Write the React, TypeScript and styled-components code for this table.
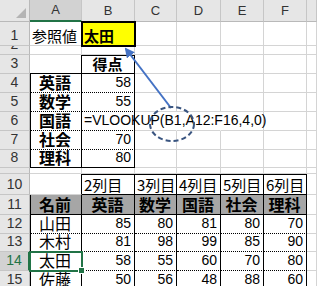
import styled, { createGlobalStyle, css } from 'styled-components'

type Line = 'grid' | 'solid' | 'dotted' | 'none'

type Spec = {
  text?: string
  r?: Line
  b?: Line
  l?: boolean
  t?: boolean
  align?: 'left' | 'center' | 'right'
  bold?: boolean
  bg?: string
  jp?: boolean
  size?: number
  mark?: 'ref' | 'sel'
  spill?: boolean
}

const GlobalStyle = createGlobalStyle`
  html, body {
    margin: 0;
    padding: 0;
    background: #fff;
    overflow: hidden;
  }
`

const COLS = ['A', 'B', 'C', 'D', 'E', 'F', '']
const ROW_HEIGHTS = [24, 9, 19, 19, 19, 19, 19, 18, 6, 21, 20, 19, 18, 19, 19]

// 表1: 得点
const subjects: [string, string][] = [
  ['英語', '58'],
  ['数学', '55'],
  ['国語', ''],
  ['社会', '70'],
  ['理科', '80'],
]

// 表2: 成績一覧
const people: [string, number[]][] = [
  ['山田', [85, 80, 81, 80, 70]],
  ['木村', [81, 98, 99, 85, 90]],
  ['太田', [58, 55, 60, 70, 80]],
  ['佐藤', [50, 56, 48, 88, 60]],
]

const empty = (n: number): Spec[] => Array.from({ length: n }, () => ({}))

function buildRows(): Spec[][] {
  const rows: Spec[][] = []
  rows.push([
    { text: '参照値', jp: true, align: 'left' },
    { text: '太田', jp: true, bold: true, bg: '#ffff00', mark: 'ref' },
    ...empty(5),
  ])
  rows.push(empty(7))
  rows.push([
    { r: 'solid', b: 'solid' },
    { text: '得点', jp: true, bold: true, align: 'center', t: true, r: 'solid', b: 'solid', size: 15 },
    ...empty(5),
  ])
  subjects.forEach(([name, score], i) => {
    const last = i === subjects.length - 1
    const b: Line = last ? 'solid' : 'dotted'
    const isFormula = name === '国語'
    rows.push([
      { text: name, jp: true, bold: true, align: 'center', l: true, r: 'solid', b, size: 16 },
      isFormula
        ? { text: '=VLOOKUP(B1,A12:F16,4,0)', align: 'left', r: 'solid', b, spill: true }
        : { text: score, align: 'right', r: 'solid', b },
      isFormula ? { r: 'none' } : {},
      isFormula ? { r: 'none' } : {},
      {},
      {},
      {},
    ])
  })
  rows.push(empty(7))
  rows.push([
    { r: 'solid' },
    ...['2列目', '3列目', '4列目', '5列目', '6列目'].map<Spec>((t) => ({
      text: t,
      jp: true,
      align: 'left',
      t: true,
      r: 'solid',
      b: 'solid',
    })),
    {},
  ])
  rows.push([
    ...['名前', '英語', '数学', '国語', '社会', '理科'].map<Spec>((t, i) => ({
      text: t,
      jp: true,
      bold: true,
      align: 'center',
      bg: '#a6a6a6',
      l: i === 0,
      r: 'solid',
      b: 'solid',
      size: 16,
    })),
    {},
  ])
  people.forEach(([name, scores]) => {
    rows.push([
      {
        text: name,
        jp: true,
        align: 'center',
        l: true,
        r: 'solid',
        b: 'dotted',
        size: 16,
        mark: name === '太田' ? 'sel' : undefined,
      },
      ...scores.map<Spec>((s) => ({ text: String(s), align: 'right', r: 'solid', b: 'dotted' })),
      {},
    ])
  })
  return rows
}

export default function App() {
  const rows = buildRows()
  return (
    <>
      <GlobalStyle />
      <Sheet>
        <Corner />
        {COLS.map((c) => (
          <ColHeader key={c || 'g'} $active={c === 'A'}>
            {c}
          </ColHeader>
        ))}
        {rows.map((row, ri) => [
          <RowHeader key={`h${ri}`} $active={ri + 1 === 14}>
            {ri + 1}
          </RowHeader>,
          ...row.map((s, ci) => (
            <Cell
              key={`${ri}-${ci}`}
              $r={s.r}
              $b={s.b}
              $l={s.l}
              $t={s.t}
              $align={s.align}
              $bold={s.bold}
              $bg={s.bg}
              $jp={s.jp}
              $size={s.size}
              $mark={s.mark}
              $spill={s.spill}
            >
              {s.text}
            </Cell>
          )),
        ])}
        <Overlay viewBox="0 0 317 286" width="317" height="286">
          <defs>
            <marker id="head" viewBox="0 0 10 10" refX="8" refY="5" markerWidth="5" markerHeight="5" orient="auto">
              <path d="M0 0 L10 5 L0 10 z" fill="#4472c4" />
            </marker>
          </defs>
          <line x1="171" y1="108" x2="126" y2="49" stroke="#4472c4" strokeWidth="2" markerEnd="url(#head)" />
          <ellipse cx="172" cy="124" rx="22" ry="17" fill="none" stroke="#3a5580" strokeWidth="2" strokeDasharray="5 3" />
        </Overlay>
      </Sheet>
    </>
  )
}

const lineCss = (l: Line | undefined) => {
  switch (l) {
    case 'solid':
      return '1px solid #000'
    case 'dotted':
      return '1px dotted #000'
    case 'none':
      return '1px solid transparent'
    default:
      return '1px solid #d4d4d4'
  }
}

const Sheet = styled.div`
  position: relative;
  display: grid;
  grid-template-columns: 30px 52px 53px 42px 44px 43px 43px 10px;
  grid-template-rows: 22px ${ROW_HEIGHTS.map((h) => `${h}px`).join(' ')};
  width: 317px;
  height: 286px;
  overflow: hidden;
  font-family: 'Liberation Sans', Arial, sans-serif;
  color: #000;
`

const Corner = styled.div`
  position: relative;
  background: #e6e6e6;
  border-right: 1px solid #b9b9b9;
  border-bottom: 1px solid #b9b9b9;
  box-sizing: border-box;

  &::after {
    content: '';
    position: absolute;
    right: 3px;
    bottom: 3px;
    width: 10px;
    height: 10px;
    background: #b4b4b4;
    clip-path: polygon(100% 0, 100% 100%, 0 100%);
  }
`

const ColHeader = styled.div<{ $active?: boolean }>`
  box-sizing: border-box;
  display: flex;
  align-items: flex-end;
  justify-content: center;
  padding-bottom: 3px;
  background: ${(p) => (p.$active ? '#d2d2d2' : '#e6e6e6')};
  border-right: 1px solid #c6c6c6;
  border-bottom: ${(p) => (p.$active ? '2px solid #217346' : '1px solid #b9b9b9')};
  font-size: 13px;
  line-height: 15px;
  color: #333;
`

const RowHeader = styled.div<{ $active?: boolean }>`
  box-sizing: border-box;
  display: flex;
  align-items: flex-end;
  justify-content: center;
  overflow: hidden;
  padding-bottom: 1px;
  background: ${(p) => (p.$active ? '#d2d2d2' : '#e6e6e6')};
  border-right: ${(p) => (p.$active ? '2px solid #217346' : '1px solid #b9b9b9')};
  border-bottom: 1px solid #c6c6c6;
  font-size: 14px;
  line-height: 17px;
  color: ${(p) => (p.$active ? '#217346' : '#333')};
`

const Cell = styled.div<{
  $r?: Line
  $b?: Line
  $l?: boolean
  $t?: boolean
  $align?: 'left' | 'center' | 'right'
  $bold?: boolean
  $bg?: string
  $jp?: boolean
  $size?: number
  $mark?: 'ref' | 'sel'
  $spill?: boolean
}>`
  position: relative;
  box-sizing: border-box;
  display: flex;
  align-items: flex-end;
  justify-content: ${(p) =>
    p.$align === 'right' ? 'flex-end' : p.$align === 'center' ? 'center' : 'flex-start'};
  padding: 0 3px 1px 2px;
  white-space: nowrap;
  overflow: ${(p) => (p.$spill ? 'visible' : 'hidden')};
  z-index: ${(p) => (p.$spill ? 2 : p.$mark ? 3 : 'auto')};
  background: ${(p) => p.$bg ?? 'transparent'};
  border-right: ${(p) => lineCss(p.$r)};
  border-bottom: ${(p) => lineCss(p.$b)};
  box-shadow: ${(p) =>
    [p.$l ? 'inset 1px 0 0 #000' : '', p.$t ? 'inset 0 1px 0 #000' : ''].filter(Boolean).join(', ') ||
    'none'};
  font-family: ${(p) =>
    p.$jp ? "'Noto Sans CJK JP', 'Liberation Sans', sans-serif" : "'Liberation Sans', Arial, sans-serif"};
  font-weight: ${(p) => (p.$bold ? 700 : 400)};
  font-size: ${(p) => p.$size ?? (p.$jp ? 15 : 14)}px;
  line-height: 17px;

  ${(p) =>
    p.$mark === 'ref' &&
    css`
      outline: 2px solid #000;
      outline-offset: -1px;
    `}

  ${(p) =>
    p.$mark === 'sel' &&
    css`
      outline: 2px solid #217346;
      outline-offset: -1px;
      overflow: visible;

      &::after {
        content: '';
        position: absolute;
        right: -4px;
        bottom: -4px;
        width: 5px;
        height: 5px;
        background: #217346;
        border: 1px solid #fff;
      }
    `}
`

const Overlay = styled.svg`
  position: absolute;
  left: 0;
  top: 0;
  pointer-events: none;
  z-index: 5;
`
